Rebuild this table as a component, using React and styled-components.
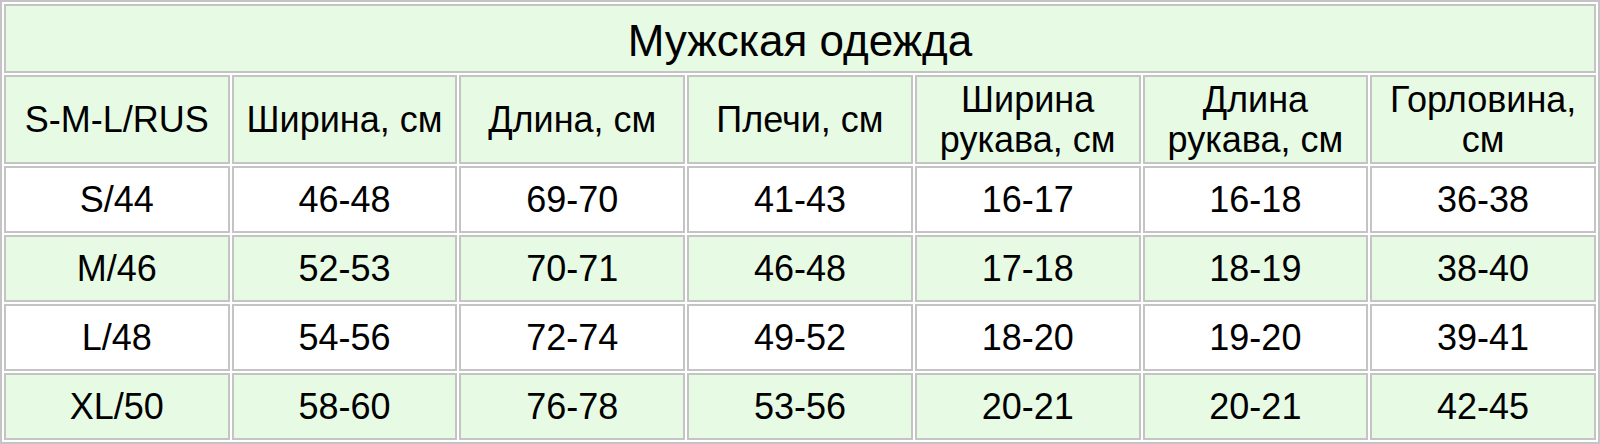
import React from "react";
import styled, { createGlobalStyle } from "styled-components";

const GlobalStyle = createGlobalStyle`
    * { box-sizing: border-box; }
    body {
        margin: 0;
        background: #ffffff;
        font-family: "Liberation Sans", Arial, sans-serif;
    }
`

const SizeTable = styled.table`
    width: 1600px;
    table-layout: fixed;
    border-collapse: separate;
    border-spacing: 2px;
    border: 2px solid #c4c4c4;
    background-color: #ffffff;
    color: #000000;
`

const TitleCell = styled.td`
    height: 69px;
    border: 2px solid #c4c4c4;
    background-color: #e7fae4;
    text-align: center;
    vertical-align: middle;
    font-size: 44px;
    padding: 4px 4px 0 4px;
`

const HeadCell = styled.td`
    height: 89px;
    border: 2px solid #c4c4c4;
    background-color: #e7fae4;
    text-align: center;
    vertical-align: middle;
    font-size: 36px;
    line-height: 40px;
    padding: 0 4px;
`

const Cell = styled.td`
    height: 67px;
    border: 2px solid #c4c4c4;
    background-color: ${(props) => (props.$green ? "#e7fae4" : "#ffffff")};
    text-align: center;
    vertical-align: middle;
    font-size: 36px;
    padding: 0 4px;
`

const headers = [
    "S-M-L/RUS",
    "Ширина, см",
    "Длина, см",
    "Плечи, см",
    "Ширина рукава, см",
    "Длина рукава, см",
    "Горловина, см",
]

const rows = [
    ["S/44", "46-48", "69-70", "41-43", "16-17", "16-18", "36-38"],
    ["M/46", "52-53", "70-71", "46-48", "17-18", "18-19", "38-40"],
    ["L/48", "54-56", "72-74", "49-52", "18-20", "19-20", "39-41"],
    ["XL/50", "58-60", "76-78", "53-56", "20-21", "20-21", "42-45"],
]

const App = () => {
    return (
        <>
            <GlobalStyle />
            <SizeTable>
                <tbody>
                    <tr>
                        <TitleCell colSpan={7}>Мужская одежда</TitleCell>
                    </tr>
                    <tr>
                        {headers.map((h) => (
                            <HeadCell key={h}>{h}</HeadCell>
                        ))}
                    </tr>
                    {rows.map((row, i) => (
                        <tr key={row[0]}>
                            {row.map((value, j) => (
                                <Cell key={j} $green={i % 2 === 1}>{value}</Cell>
                            ))}
                        </tr>
                    ))}
                </tbody>
            </SizeTable>
        </>
    )
}

export default App;
